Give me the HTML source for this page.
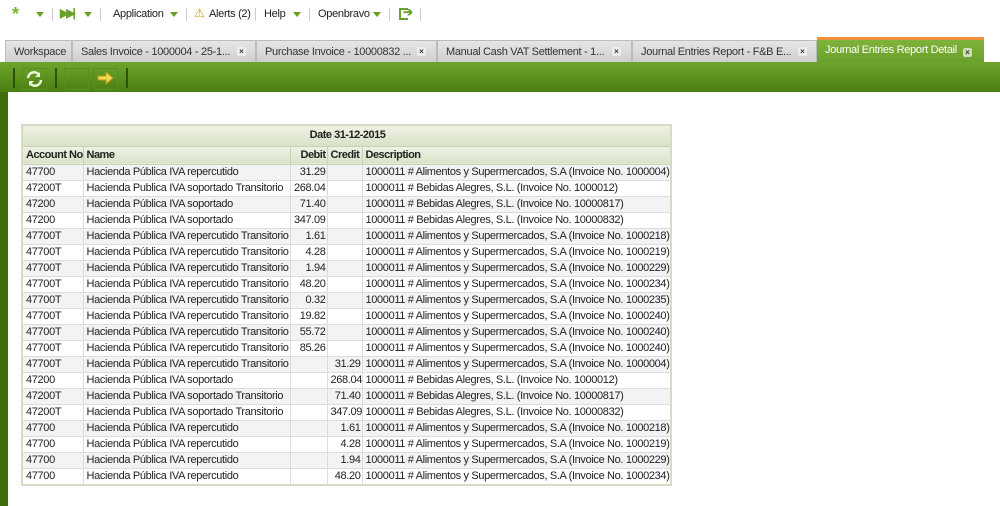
<!DOCTYPE html>
<html><head><meta charset="utf-8">
<style>
*{margin:0;padding:0;box-sizing:border-box}
body{width:1000px;height:506px;overflow:hidden;background:#fff;font-family:"Liberation Sans",sans-serif;position:relative}
.top{position:absolute;top:0;left:0;height:30px;width:1000px;font-size:11px;color:#222;letter-spacing:-0.3px}
.top span{position:absolute;top:8px}
.sep{position:absolute;top:8px;width:1px;height:13px;background:#ccc}
.tri{position:absolute;top:12px;width:0;height:0;border-left:4px solid transparent;border-right:4px solid transparent;border-top:5px solid #6a9d1f}
.tab{position:absolute;top:40px;height:22px;background:linear-gradient(#e6e6e6,#cfcfcf);border:1px solid #bbb;border-bottom:none;font-size:11px;color:#333;padding:5px 0 0 8px;white-space:nowrap;overflow:hidden;letter-spacing:-0.3px}
.x{position:absolute;top:6px;width:9px;height:9px;background:#eee;font-size:8px;line-height:9px;text-align:center;color:#333;font-weight:bold;border-radius:2px;letter-spacing:0}
.act{background:linear-gradient(#7fb33a,#6aa02c);color:#fff;border:none;border-top:3px solid #f0903a;padding-top:4px}
.bar{position:absolute;top:62px;left:0;width:1000px;height:30px;background:linear-gradient(#6ea52c,#4a7f12)}
.strip{position:absolute;top:92px;left:0;width:8px;height:414px;background:#3f6e0a}
.tsep{position:absolute;top:68px;width:2px;height:20px;background:#2f5208}
.btn{position:absolute;top:68px;width:25px;height:22px;border:1px solid #5b8d20}
table{position:absolute;left:21px;top:124px;border-collapse:collapse;table-layout:fixed;width:649px;font-size:11px;color:#222;border:2px solid #d4dcc6;letter-spacing:-0.35px}
td,th{height:16px;padding:0 1px 0 3px;border:1px solid #dcdcdc;white-space:nowrap;line-height:15px;overflow:hidden}
th{background:linear-gradient(#eef2e4,#d9e2c8);font-weight:bold;text-align:left;height:18px;border-color:#c8d2b5;letter-spacing:-0.5px}
th.t{text-align:center;height:21px}
tr:nth-child(odd) td{background:#f3f3f3}
.r{text-align:right}
</style></head><body>
<div class="top">
<span style="left:12px;top:4px;color:#7ab32e;font-size:18px;font-weight:bold">*</span><div class="tri" style="left:36px"></div><div class="sep" style="left:52px"></div>
<span style="left:60px;top:6px;color:#6aa02c;font-size:12px;font-weight:bold;letter-spacing:-3px">▶▶|</span><div class="tri" style="left:84px"></div><div class="sep" style="left:100px"></div>
<span style="left:113px">Application</span><div class="tri" style="left:170px"></div><div class="sep" style="left:186px"></div>
<span style="left:194px;top:6px;color:#c8a000;font-size:12px">⚠</span><span style="left:209px">Alerts (2)</span><div class="sep" style="left:255px"></div>
<span style="left:264px">Help</span><div class="tri" style="left:293px"></div><div class="sep" style="left:309px"></div>
<span style="left:318px">Openbravo</span><div class="tri" style="left:373px"></div><div class="sep" style="left:389px"></div>
<div style="position:absolute;left:399px;top:8px;width:9px;height:12px;border:2px solid #6aa02c;border-right:none"></div><span style="left:403px;top:5px;color:#6aa02c;font-size:12px;font-weight:bold">➔</span><div class="sep" style="left:420px"></div>
</div>
<div class="tab" style="left:5px;width:67px">Workspace</div>
<div class="tab" style="left:72px;width:184px">Sales Invoice - 1000004 - 25-1...<div class="x" style="left:164px">×</div></div>
<div class="tab" style="left:256px;width:181px">Purchase Invoice - 10000832 ...<div class="x" style="left:160px">×</div></div>
<div class="tab" style="left:437px;width:195px">Manual Cash VAT Settlement - 1...<div class="x" style="left:174px">×</div></div>
<div class="tab" style="left:632px;width:185px">Journal Entries Report - F&amp;B E...<div class="x" style="left:165px">×</div></div>
<div class="tab act" style="left:817px;width:167px;top:37px;height:25px">Journal Entries Report Detail<div class="x" style="left:146px;top:8px;background:#cfe0b8">×</div></div>
<div class="bar"></div>
<div class="tsep" style="left:13px"></div>
<div class="btn" style="left:22px"><svg width="23" height="20" viewBox="0 0 23 20"><path d="M5 9a6 6 0 0 1 11-3M18 11a6 6 0 0 1-11 3" fill="none" stroke="#e8f5d8" stroke-width="2.5"/><path d="M17 3v5h-5z" fill="#e8f5d8"/><path d="M6 17v-5h5z" fill="#e8f5d8"/></svg></div>
<div class="tsep" style="left:55px"></div>
<div class="btn" style="left:64px"></div>
<div class="btn" style="left:93px"><svg width="23" height="20" viewBox="0 0 23 20"><path d="M4 7h8V3l7 6-7 6v-4H4z" fill="#f2d84a" stroke="#b89a20" stroke-width="1"/></svg></div>
<div class="tsep" style="left:126px"></div>
<div class="strip"></div>
<table>
<colgroup><col style="width:61px"><col style="width:207px"><col style="width:37px"><col style="width:35px"><col style="width:309px"></colgroup>
<tr><th class="t" colspan="5">Date 31-12-2015</th></tr>
<tr><th>Account No.</th><th>Name</th><th class="r">Debit</th><th>Credit</th><th>Description</th></tr>
<tr><td>47700</td><td>Hacienda Pública IVA repercutido</td><td class="r">31.29</td><td class="r"></td><td>1000011 # Alimentos y Supermercados, S.A (Invoice No. 1000004)</td></tr>
<tr><td>47200T</td><td>Hacienda Publica IVA soportado Transitorio</td><td class="r">268.04</td><td class="r"></td><td>1000011 # Bebidas Alegres, S.L. (Invoice No. 1000012)</td></tr>
<tr><td>47200</td><td>Hacienda Pública IVA soportado</td><td class="r">71.40</td><td class="r"></td><td>1000011 # Bebidas Alegres, S.L. (Invoice No. 10000817)</td></tr>
<tr><td>47200</td><td>Hacienda Pública IVA soportado</td><td class="r">347.09</td><td class="r"></td><td>1000011 # Bebidas Alegres, S.L. (Invoice No. 10000832)</td></tr>
<tr><td>47700T</td><td>Hacienda Pública IVA repercutido Transitorio</td><td class="r">1.61</td><td class="r"></td><td>1000011 # Alimentos y Supermercados, S.A (Invoice No. 1000218)</td></tr>
<tr><td>47700T</td><td>Hacienda Pública IVA repercutido Transitorio</td><td class="r">4.28</td><td class="r"></td><td>1000011 # Alimentos y Supermercados, S.A (Invoice No. 1000219)</td></tr>
<tr><td>47700T</td><td>Hacienda Pública IVA repercutido Transitorio</td><td class="r">1.94</td><td class="r"></td><td>1000011 # Alimentos y Supermercados, S.A (Invoice No. 1000229)</td></tr>
<tr><td>47700T</td><td>Hacienda Pública IVA repercutido Transitorio</td><td class="r">48.20</td><td class="r"></td><td>1000011 # Alimentos y Supermercados, S.A (Invoice No. 1000234)</td></tr>
<tr><td>47700T</td><td>Hacienda Pública IVA repercutido Transitorio</td><td class="r">0.32</td><td class="r"></td><td>1000011 # Alimentos y Supermercados, S.A (Invoice No. 1000235)</td></tr>
<tr><td>47700T</td><td>Hacienda Pública IVA repercutido Transitorio</td><td class="r">19.82</td><td class="r"></td><td>1000011 # Alimentos y Supermercados, S.A (Invoice No. 1000240)</td></tr>
<tr><td>47700T</td><td>Hacienda Pública IVA repercutido Transitorio</td><td class="r">55.72</td><td class="r"></td><td>1000011 # Alimentos y Supermercados, S.A (Invoice No. 1000240)</td></tr>
<tr><td>47700T</td><td>Hacienda Pública IVA repercutido Transitorio</td><td class="r">85.26</td><td class="r"></td><td>1000011 # Alimentos y Supermercados, S.A (Invoice No. 1000240)</td></tr>
<tr><td>47700T</td><td>Hacienda Pública IVA repercutido Transitorio</td><td class="r"></td><td class="r">31.29</td><td>1000011 # Alimentos y Supermercados, S.A (Invoice No. 1000004)</td></tr>
<tr><td>47200</td><td>Hacienda Pública IVA soportado</td><td class="r"></td><td class="r">268.04</td><td>1000011 # Bebidas Alegres, S.L. (Invoice No. 1000012)</td></tr>
<tr><td>47200T</td><td>Hacienda Publica IVA soportado Transitorio</td><td class="r"></td><td class="r">71.40</td><td>1000011 # Bebidas Alegres, S.L. (Invoice No. 10000817)</td></tr>
<tr><td>47200T</td><td>Hacienda Publica IVA soportado Transitorio</td><td class="r"></td><td class="r">347.09</td><td>1000011 # Bebidas Alegres, S.L. (Invoice No. 10000832)</td></tr>
<tr><td>47700</td><td>Hacienda Pública IVA repercutido</td><td class="r"></td><td class="r">1.61</td><td>1000011 # Alimentos y Supermercados, S.A (Invoice No. 1000218)</td></tr>
<tr><td>47700</td><td>Hacienda Pública IVA repercutido</td><td class="r"></td><td class="r">4.28</td><td>1000011 # Alimentos y Supermercados, S.A (Invoice No. 1000219)</td></tr>
<tr><td>47700</td><td>Hacienda Pública IVA repercutido</td><td class="r"></td><td class="r">1.94</td><td>1000011 # Alimentos y Supermercados, S.A (Invoice No. 1000229)</td></tr>
<tr><td>47700</td><td>Hacienda Pública IVA repercutido</td><td class="r"></td><td class="r">48.20</td><td>1000011 # Alimentos y Supermercados, S.A (Invoice No. 1000234)</td></tr>
</table>
</body></html>
